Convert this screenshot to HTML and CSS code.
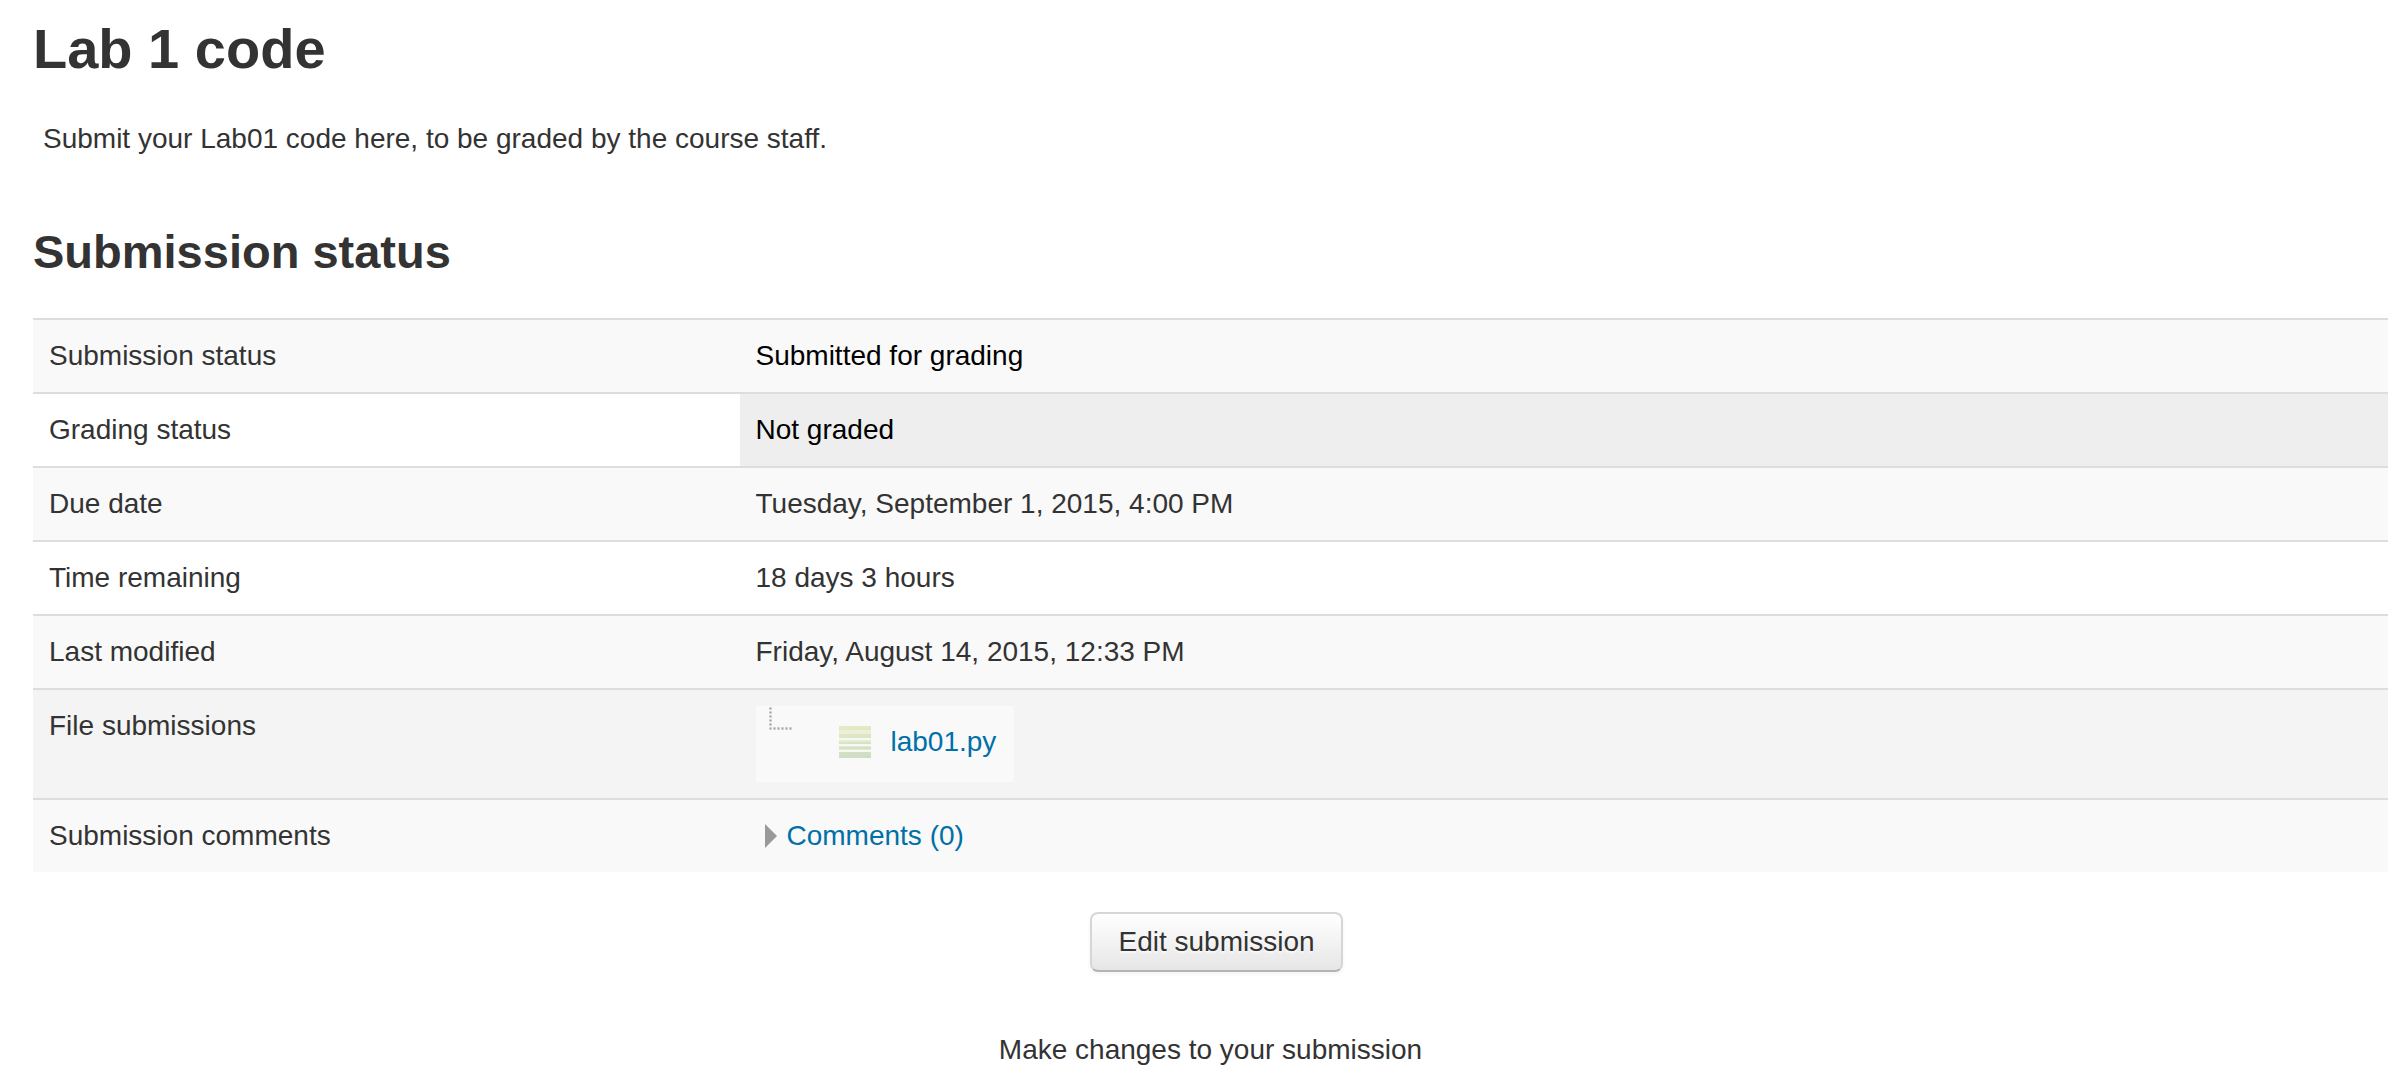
FILE: index.html
```
<!DOCTYPE html>
<html lang="en">
<head>
  <meta charset="UTF-8">
  <meta name="viewport" content="width=device-width, initial-scale=1.0">
  <title>Lab 1 code</title>
  <link rel="stylesheet" href="styles.css">
</head>
<body>
  <main>
    <h1>Lab 1 code</h1>
    <p class="intro">Submit your Lab01 code here, to be graded by the course staff.</p>

    <h2>Submission status</h2>
    <table class="status-table">
      <tbody>
        <tr>
          <th scope="row">Submission status</th>
          <td class="submitted">Submitted for grading</td>
        </tr>
        <tr>
          <th scope="row">Grading status</th>
          <td class="not-graded">Not graded</td>
        </tr>
        <tr>
          <th scope="row">Due date</th>
          <td>Tuesday, September 1, 2015, 4:00 PM</td>
        </tr>
        <tr>
          <th scope="row">Time remaining</th>
          <td>18 days 3 hours</td>
        </tr>
        <tr>
          <th scope="row">Last modified</th>
          <td>Friday, August 14, 2015, 12:33 PM</td>
        </tr>
        <tr class="files-row">
          <th scope="row">File submissions</th>
          <td>
            <div class="file-tree">
              <svg class="branch" width="24" height="24" viewBox="0 0 24 24" aria-hidden="true">
                <g fill="none" stroke-dasharray="2 2">
                  <path d="M1.5 1.5V24M4.5 22.5H24" stroke="#ddd" stroke-width="3"/>
                  <path d="M1.5 1.5V24M4.5 22.5H24" stroke="#aaa" stroke-width="2"/>
                </g>
              </svg>
              <svg class="file-icon" width="32" height="32" viewBox="0 0 32 32" aria-hidden="true">
                <defs>
                  <linearGradient id="sheet" x1="0" y1="0" x2="1" y2="3" gradientTransform="scale(1 .4)">
                    <stop offset="0" stop-color="#e5ebc4"/>
                    <stop offset="1" stop-color="#cbd8c6"/>
                  </linearGradient>
                </defs>
                <rect width="32" height="32" fill="url(#sheet)"/>
                <g fill="#f6f8f2">
                  <rect y="4" width="32" height="4" opacity=".5"/>
                  <rect y="12" width="32" height="2"/>
                  <rect y="14" width="32" height="2" opacity=".4"/>
                  <rect y="18" width="32" height="2"/>
                  <rect y="20" width="32" height="1" opacity=".4"/>
                  <rect y="24" width="32" height="2"/>
                  <rect y="23" width="32" height="1" opacity=".4"/>
                </g>
              </svg>
              <a href="#">lab01.py</a>
            </div>
          </td>
        </tr>
        <tr>
          <th scope="row">Submission comments</th>
          <td>
            <a class="comments" href="#">
              <svg width="12" height="24" viewBox="0 0 12 24" aria-hidden="true"><path d="M0 0L12 12L0 24Z" fill="#999"/></svg>
              Comments (0)
            </a>
          </td>
        </tr>
      </tbody>
    </table>

    <div class="actions">
      <button type="button">Edit submission</button>
      <p>Make changes to your submission</p>
    </div>
  </main>
</body>
</html>
```
FILE: styles.css
```
body {
  margin: 0;
  padding: 9px 20px 32px 33px;
  font-family: "Helvetica Neue", "Liberation Sans", Arial, sans-serif;
  font-size: 28px;
  line-height: 40px;
  color: #333;
  background: #fff;
}

h1,
h2 {
  margin: 0;
  line-height: 80px;
}

h1 {
  font-size: 56px;
}

h2 {
  font-size: 47px;
  margin-bottom: 26px;
}

.intro {
  margin: 30px 10px 53px;
}

a {
  color: #0070a8;
  text-decoration: none;
}

.status-table {
  width: 100%;
  border-spacing: 0;
}

.status-table th,
.status-table td {
  padding: 16px;
  border-top: 2px solid #ddd;
  text-align: left;
  vertical-align: top;
  font-weight: normal;
}

.status-table th {
  width: 30%;
  box-sizing: border-box;
}

.status-table tr:nth-child(odd) {
  background: #f9f9f9;
}

.status-table .files-row {
  background: #f4f4f4;
}

.status-table .submitted,
.status-table .not-graded {
  color: #000;
}

.status-table .not-graded {
  background: #eee;
}

.file-tree {
  display: flex;
  align-items: flex-start;
  width: fit-content;
  padding: 0 18px 20px 13px;
  background: #f9f9f9;
}

.file-icon {
  margin: 20px 20px 0 46px;
}

.file-tree a {
  margin-top: 16px;
}

.comments {
  display: flex;
  align-items: center;
  gap: 10px;
  width: fit-content;
  margin-left: 9px;
}

.actions {
  margin-top: 40px;
  text-align: center;
}

.actions button {
  margin-left: 12px;
  padding: 8px 26px;
  font: inherit;
  color: #333;
  text-shadow: 0 2px 2px rgba(255, 255, 255, 0.75);
  background: linear-gradient(#fff, #e6e6e6);
  border: 2px solid #d6d6d6;
  border-bottom-color: #b3b3b3;
  border-radius: 8px;
  box-shadow: 0 2px 4px rgba(0, 0, 0, 0.05);
  cursor: pointer;
}

.actions p {
  margin: 58px 0 0;
}
```
